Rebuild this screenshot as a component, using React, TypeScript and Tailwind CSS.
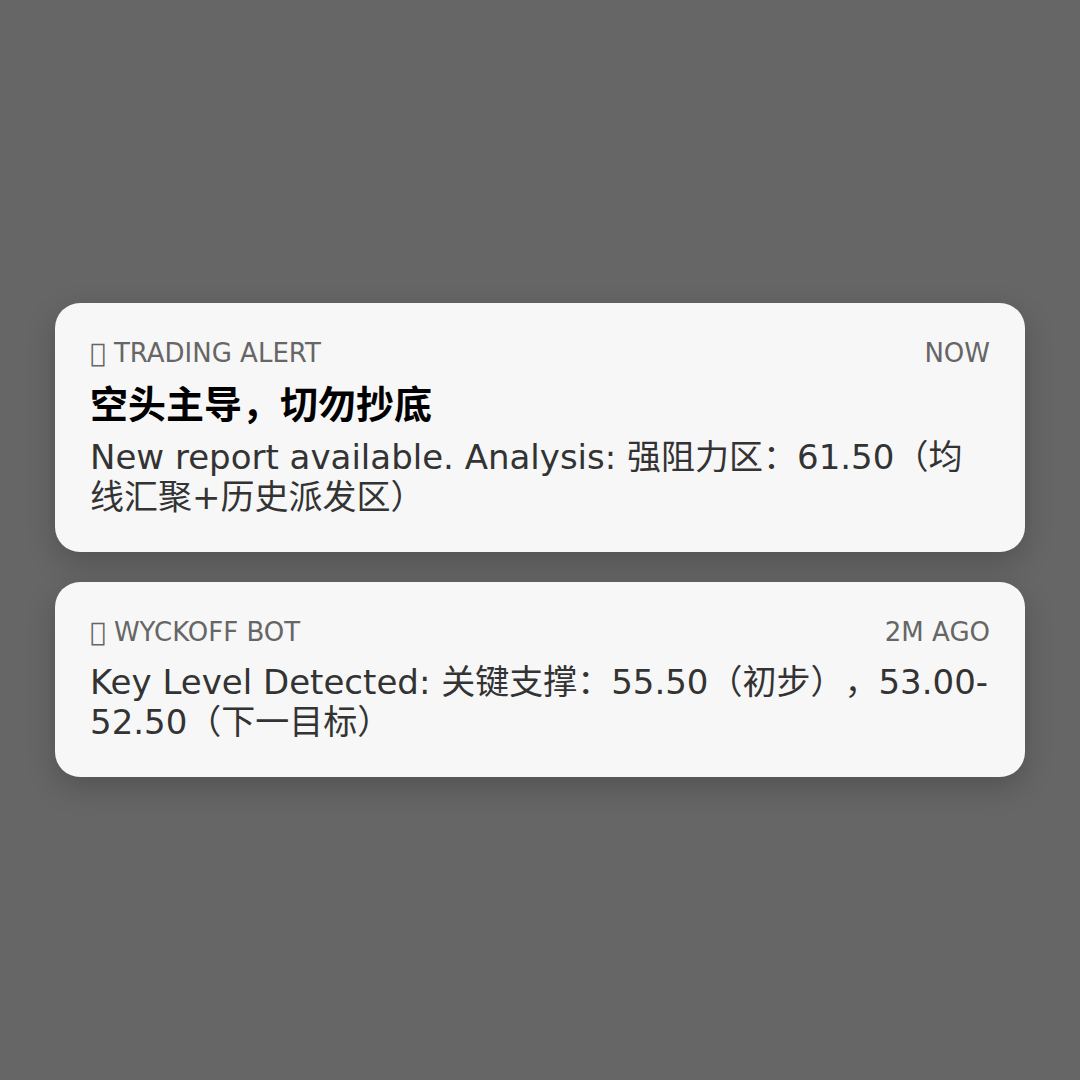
interface NotificationProps {
  icon: string
  app: string
  time: string
  title?: string
  body: string
}

function Notification({ icon, app, time, title, body }: NotificationProps) {
  return (
    <article className="bg-[#f7f7f7] rounded-[25px] p-[35px] shadow-[0_10px_30px_rgba(0,0,0,0.2)]">
      <div className="flex justify-between mb-[14px] text-[26px] leading-[31px] text-[#666666] uppercase">
        <span>{icon} {app}</span>
        <time>{time}</time>
      </div>
      {title && <h2 className="mb-[10px] text-[38px] leading-[44px] font-bold text-black">{title}</h2>}
      <p className="text-[34px] leading-[40px] text-[#333333]">{body}</p>
    </article>
  )
}

const notifications: NotificationProps[] = [
  {
    icon: '\u{10FFFD}',
    app: 'Trading Alert',
    time: 'Now',
    title: '空头主导，切勿抄底',
    body: 'New report available. Analysis: 强阻力区：61.50（均线汇聚+历史派发区）',
  },
  {
    icon: '\u{10FFFD}',
    app: 'Wyckoff Bot',
    time: '2m ago',
    body: 'Key Level Detected: 关键支撑：55.50（初步），53.00-52.50（下一目标）',
  },
]

export default function App() {
  return (
    <main
      lang="zh-CN"
      className="min-h-screen flex flex-col justify-center gap-[30px] px-[55px] bg-[#666666] font-['DejaVu_Sans','Noto_Sans_CJK_SC',sans-serif] [text-spacing-trim:space-all]"
    >
      {notifications.map(n => (
        <Notification key={n.app} {...n} />
      ))}
    </main>
  )
}
